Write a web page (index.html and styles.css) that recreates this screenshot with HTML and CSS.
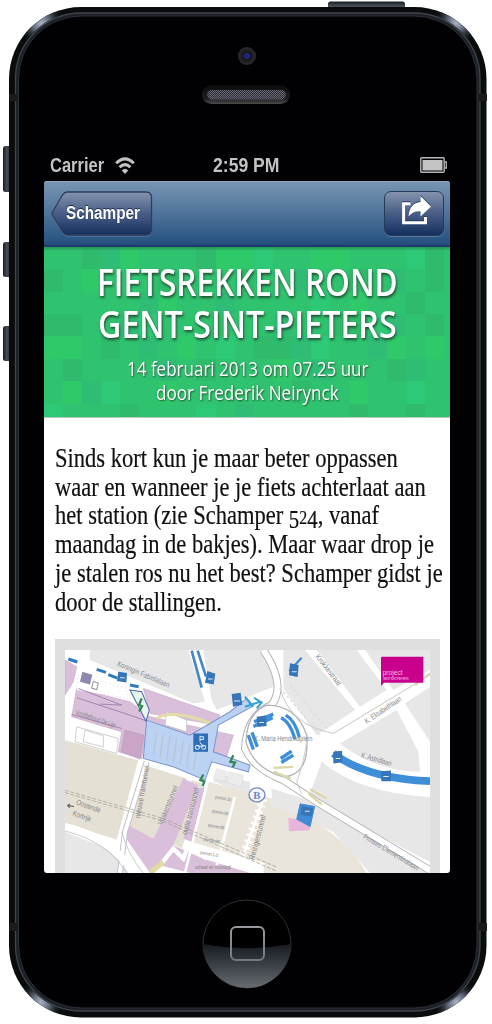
FILE: index.html
```html
<!DOCTYPE html>
<html lang="nl">
<head>
<meta charset="utf-8">
<title>Schamper</title>
<link rel="stylesheet" href="styles.css">
</head>
<body>
<div class="device">
  <svg class="shell" viewBox="0 0 492 1024" aria-hidden="true">
    <defs>
      <linearGradient id="btn" x1="0" x2="1" y1="0" y2="0"><stop offset="0" stop-color="#15191f"/><stop offset=".4" stop-color="#444b57"/><stop offset="1" stop-color="#20252c"/></linearGradient>
      <linearGradient id="top" x1="0" x2="0" y1="0" y2="1"><stop offset="0" stop-color="#15191f"/><stop offset=".5" stop-color="#4a5059"/><stop offset="1" stop-color="#20252c"/></linearGradient>
      <radialGradient id="shine"><stop offset="0" stop-color="#aeb5ca"/><stop offset=".4" stop-color="#5d6474"/><stop offset="1" stop-color="#0a0c0f" stop-opacity="0"/></radialGradient>
      <radialGradient id="lens"><stop offset="0" stop-color="#000"/><stop offset=".15" stop-color="#2531a0"/><stop offset=".3" stop-color="#1a2270"/><stop offset=".42" stop-color="#161719"/><stop offset="1" stop-color="#2c2c2d"/></radialGradient>
      <linearGradient id="spk" x1="0" x2="0" y1="0" y2="1"><stop offset="0" stop-color="#0b0b0c"/><stop offset=".7" stop-color="#1d1d1e"/><stop offset="1" stop-color="#4b4b4b"/></linearGradient>
      <pattern id="mesh" width="2" height="2" patternUnits="userSpaceOnUse"><rect width="2" height="2" fill="#2c2c34"/><path d="M0 0h1v1H0zM1 1h1v1H1z" fill="#686875"/></pattern>
      <linearGradient id="gloss" x1="0" x2="0" y1="0" y2="1"><stop offset="0" stop-color="#171b20"/><stop offset=".5" stop-color="#3c4248"/><stop offset="1" stop-color="#686d72"/></linearGradient>
      <linearGradient id="sq" x1="0" x2="0" y1="0" y2="1"><stop offset="0" stop-color="#9898a0"/><stop offset="1" stop-color="#74787f"/></linearGradient>
      <clipPath id="ring"><path clip-rule="evenodd" d="M81 7H414.500A72 72 0 0 1 486.500 79V945.500A72 72 0 0 1 414.500 1017.500H81A72 72 0 0 1 9 945.500V79A72 72 0 0 1 81 7ZM80 13A65 65 0 0 0 15 78V946A65 65 0 0 0 80 1011H415.500A65 65 0 0 0 480.500 946V78A65 65 0 0 0 415.500 13Z"/></clipPath>
    </defs>
    <rect x="328" y="1.500" width="77" height="9" rx="2.500" fill="url(#top)"/>
    <rect x="3" y="146" width="9" height="46" rx="2.500" fill="url(#btn)"/>
    <rect x="3" y="242" width="9" height="35" rx="2.500" fill="url(#btn)"/>
    <rect x="3" y="326" width="9" height="35" rx="2.500" fill="url(#btn)"/>
    <rect x="9" y="7" width="477.500" height="1010.500" rx="72" fill="#0a0c0c"/>
    <g clip-path="url(#ring)">
      <ellipse cx="41" cy="23" rx="24" ry="16" transform="rotate(-38 41 23)" fill="url(#shine)"/>
      <ellipse cx="456" cy="23" rx="24" ry="16" transform="rotate(38 456 23)" fill="url(#shine)"/>
      <ellipse cx="41" cy="1002" rx="24" ry="16" transform="rotate(38 41 1002)" fill="url(#shine)"/>
      <ellipse cx="456" cy="1002" rx="24" ry="16" transform="rotate(-38 456 1002)" fill="url(#shine)"/>
    </g>
    <rect x="15.500" y="13" width="464.500" height="998" rx="66" fill="#1c2025" stroke="#3e434e" stroke-width="1.300"/>
    <rect x="18.500" y="16" width="458.500" height="992" rx="63" fill="#010104" stroke="#2c3039" stroke-width="1"/>
    <path d="M9 94h8v7H9zM479 94h8v7h-8zM9 923h8v8H9zM479 923h8v8h-8z" fill="#181a1c"/>
    <circle cx="247" cy="56" r="9" fill="url(#lens)"/>
    <rect x="202" y="85" width="88" height="19" rx="9.500" fill="url(#spk)"/>
    <rect x="207" y="90" width="79" height="9.500" rx="4.700" fill="url(#mesh)"/>
    <circle cx="247" cy="944" r="44" fill="#000" stroke="#303033"/>
    <path d="M203 944Q247 952 291 944A44 44 0 0 1 203 944Z" fill="url(#gloss)"/>
    <rect x="231" y="927" width="33" height="33" rx="5" fill="none" stroke="url(#sq)" stroke-width="2"/>
  </svg>
  <main class="screen">
    <header class="status">
      <span class="carrier">Carrier</span>
      <svg class="wifi" viewBox="0 0 20 17"><g fill="none" stroke="#c3c3c3" stroke-width="3"><path d="M1.200 6.200Q10-2.500 18.800 6.200"/><path d="M4.600 10.300Q10 5 15.400 10.300"/></g><path d="M6.700 13.500Q10 10 13.300 13.500L10 17Z" fill="#c3c3c3"/></svg>
      <span class="clock">2:59 PM</span>
      <svg class="battery" viewBox="0 0 27 16"><rect x=".8" y=".8" width="23.400" height="14.400" rx="1" fill="none" stroke="#b8b8b8" stroke-width="1.400"/><rect x="2.500" y="3" width="20" height="10.500" fill="#c3c3c3"/><path d="M24.500 5h1.800v6h-1.800" fill="none" stroke="#b8b8b8" stroke-width="1.300"/></svg>
    </header>
    <nav class="bar">
      <a class="back">
        <svg class="face" viewBox="0 0 102 46"><defs><linearGradient id="face" x1="0" x2="0" y1="0" y2="1"><stop offset="0" stop-color="#8493ad"/><stop offset=".48" stop-color="#4b6088"/><stop offset="1" stop-color="#14305e"/></linearGradient></defs><path d="M16 2H95Q100.500 2 100.500 8V39Q100.500 45 95 45H16Q13.500 45 11.500 42L1.500 26Q.5 24 1.500 22L11.500 5Q13.500 2 16 2Z" fill="none" stroke="#7893b3" stroke-opacity=".7"/><path d="M16 1H95Q100.500 1 100.500 7V38Q100.500 44 95 44H16Q13.500 44 11.500 41L1.500 24.500Q.5 23 1.500 21L11.500 4Q13.500 1 16 1Z" fill="url(#face)" stroke="#2d3e5a" stroke-width="1.300"/></svg>
        <span class="back-label">Schamper</span>
      </a>
      <a class="share"><svg viewBox="0 0 30 29"><path d="M9.500 7.800H2.600V26.800H24.500V21" fill="none" stroke="#fff" stroke-width="3"/><path d="M19.500 0L30 10.500L19.500 20.500V15.200Q12 14.500 7.500 20.500Q8.500 7 19.500 6Z" fill="#fff"/></svg></a>
    </nav>
    <section class="hero">
      <svg class="mosaic" viewBox="0 0 21.300 7.600" preserveAspectRatio="none" shape-rendering="crispEdges">
        <rect width="22" height="8" fill="#30c36f"/>
        <path fill="#2fbb6b" d="M0 1h1v1H0zM2 0h1v1H2zM8 0h1v1H8zM1 3h1v1H1zM0 3h1v1H0zM6 1h1v1H6zM3 4h1v1H3zM10 1h1v1h-1zM11 4h2v1h-2zM16 1h1v1h-1zM20 0h1v2h-1zM19 2h1v1h-1zM20 3h1v1h-1zM15 3h2v1h-2zM18 5h1v1h-1zM8 5h1v1H8zM4 7h1v1H4zM13 6h1v1h-1zM16 7h1v1h-1zM19 7h1v1h-1zM6 6h1v1H6zM1 5h1v1H1z"/>
        <path fill="#2fbd76" d="M3 0h1v1H3zM9 2h1v1H9zM4 3h1v1H4zM12 3h1v1h-1zM13 4h1v1h-1zM5 4h1v1H5zM18 1h1v1h-1zM2 6h1v1H2zM6 5h1v1H6zM14 5h1v1h-1zM17 4h1v1h-1zM18 3h1v1h-1zM10 7h1v1h-1zM19 5h1v1h-1zM13 1h1v1h-1zM5 2h1v1H5z"/>
        <path fill="#2fc969" d="M4 0h1v1H4zM10 0h1v1h-1zM14 0h2v1h-2zM16 2h1v1h-1zM6 2h1v1H6zM0 4h2v1H0zM7 4h1v1H7zM12 5h1v1h-1zM6 6h1v1H6zM16 6h1v1h-1zM20 4h1v1h-1zM2 1h1v1H2zM18 4h1v1h-1zM9 0h1v1H9zM1 6h1v1H1z"/>
        <path fill="#2ec977" d="M5 3h1v1H5zM11 0h1v1h-1zM9 4h1v1H9zM14 4h1v1h-1zM3 6h1v1H3zM19 6h1v1h-1zM17 3h1v1h-1zM4 1h1v1H4zM14 2h1v1h-1zM0 7h1v1H0zM8 7h1v1H8zM19 0h1v1h-1z"/>
      </svg>
      <h1 class="title"><span class="t1">FIETSREKKEN ROND</span><span class="t2">GENT-SINT-PIETERS</span></h1>
      <p class="meta"><span class="m1">14 februari 2013 om 07.25 uur</span><span class="m2">door Frederik Neirynck</span></p>
    </section>
    <article class="story">
      <p class="lead"><span class="l1">Sinds kort kun je maar beter oppassen</span><span class="l2">waar en wanneer je je fiets achterlaat aan</span><span class="l3">het station (zie Schamper <span class="num">5</span><span class="two">2</span><span class="num">4</span>, vanaf</span><span class="l4">maandag in de bakjes). Maar waar drop je</span><span class="l5">je stalen ros nu het best? Schamper gidst je</span><span class="l6">door de stallingen.</span></p>
      <figure class="photo">
        <svg class="map" viewBox="45 45 1095 668" preserveAspectRatio="none">
          <rect x="45" y="45" width="1095" height="668" fill="#fff"/>
          <g fill="#e7e7e8">
            <path d="M120 45H415L465 200L430 205L120 75Z"/><path d="M460 45H635L670 130V155L620 175L500 225L485 195Z"/>
            <path d="M700 45H765L915 225L800 300L700 160ZM800 45H920L1010 165L930 215Z"/><path d="M945 45H1140V105L1030 165Z"/>
            <path d="M870 325L1040 225L1105 350L1110 410Q980 410 870 325ZM1065 205L1140 155V320Z"/><path d="M780 475L815 380Q930 475 1140 485V680L890 550Z"/>
            <path d="M45 590L200 650L245 713H45ZM665 460L760 490L1140 713H960L850 590L665 510Z"/>
            <path d="M500 415L600 440V480L490 440Z"/>
          </g>
          <g fill="#e5e0d4"><path d="M45 315L265 375L200 613L45 565ZM285 390L410 430L310 610L225 570ZM425 435L460 445L395 640L340 610Z"/><path d="M475 440L665 490L665 690L425 620ZM665 510L790 560Q890 610 950 713H640Z" fill="#eae5da"/></g>
          <g fill="#d9bfda" stroke="#bd9bbd" stroke-width="1.500"><path d="M80 160L240 200L300 245L550 300L530 365L490 350L290 300L275 370L205 350L215 290L65 245ZM280 160L510 240L500 270L300 235ZM45 75L80 95L70 140L45 180Z"/><path d="M400 430L445 450L370 630L460 670L600 713H420L330 690L300 713L215 590L235 570L310 610ZM445 460L465 455L425 620L400 610Z" stroke="none"/></g>
          <path d="M225 285L282 300L270 372L213 350Z" fill="#caa5c8" stroke="#a78bb2"/>
          <g fill="#fff" stroke="#b8b8ba" stroke-width="2"><path d="M80 275L205 310L200 355L75 320ZM105 285L160 302V335L100 320ZM350 230L410 255V290L345 270Z"/></g>
          <path d="M85 120L230 160L235 190L80 165Z" fill="#fff" stroke="#d9bfda" stroke-width="2" stroke-dasharray="3 9"/>
          <path d="M80 188L240 240L290 258M65 238L215 280M85 160L215 210L150 207" fill="none" stroke="#967ba8" stroke-width="2.500"/>
          <path d="M320 250Q370 220 490 268" fill="none" stroke="#e2dca6" stroke-width="9"/>
          <path d="M290 255L420 300L540 230L590 190L605 215L505 270L490 350L600 390L595 410L485 380L465 435L370 395L280 370Z" fill="#bcd2f2" stroke="#7b95cf" stroke-width="3"/>
          <path d="M320 290L310 360M340 297L330 368M360 303L350 375M380 310L370 382M400 317L390 390M420 323L410 397M440 345L430 405" stroke="#b8c5d4" stroke-width="4"/>
          <path d="M240 165L275 170L298 225L288 258Z" fill="#e7f5ee" stroke="#4869a9" stroke-width="3"/>
          <path d="M210 713L225 590L290 380" stroke="#c0c0cc" stroke-width="18" fill="none"/><path d="M210 713L225 590L290 380" stroke="#fff" stroke-width="12" fill="none"/>
          <path d="M45 575Q190 610 250 713" fill="none" stroke="#fff" stroke-width="24"/><path d="M45 587Q175 620 230 713M215 590Q235 660 280 713" fill="none" stroke="#aeb0bb" stroke-width="2"/>
          <path d="M475 430L405 713M555 485L500 690M640 490L570 690" stroke="#fff" stroke-width="8"/><path d="M640 490L570 690" stroke="#fff" stroke-width="24" stroke-dasharray="7 12"/>
          <path d="M45 465L340 550L680 695M45 472L340 558L680 708" fill="none" stroke="#9b9b8c" stroke-width="3" stroke-dasharray="12 5" opacity=".65"/>
          <path d="M330 690L370 640L400 670L415 630L470 670" stroke="#fff" stroke-width="13" fill="none"/>
          <path d="M300 713L340 680" stroke="#dfdba2" stroke-width="15"/>
          <path d="M500 400L530 410L525 440L490 430ZM535 410L580 420L575 455L530 442Z" fill="#ececec" stroke="#ccc"/>
          <g fill="none"><path d="M640 45Q710 150 665 210Q590 240 585 340Q610 400 700 435L800 500L1140 705" stroke="#b4b4b6" stroke-width="24"/><path d="M640 45Q710 150 665 210Q590 240 585 340Q610 400 700 435L800 500L1140 705" stroke="#fff" stroke-width="18"/><path d="M650 210Q740 210 770 300Q780 420 700 425Q610 400 588 320Q590 235 650 210Z" fill="#fff" stroke="#b4b4b6" stroke-width="4"/><path d="M690 160Q720 270 850 295L1140 120M770 320Q760 390 740 440L755 475" stroke="#ccc" stroke-width="3"/><path d="M700 170L810 300M720 150L830 280" stroke="#ddd" stroke-width="4" stroke-dasharray="9 7"/></g>
          <g fill="none" stroke="#3f8ed8"><path d="M850 355Q950 430 1140 438" stroke-width="23"/><path d="M55 72L82 81M140 103L168 112M175 119L202 129M240 150L266 155" stroke-width="9" stroke="#2f7abd"/><path d="M425 47L455 158M443 47L468 125" stroke-width="8" stroke="#4388c5"/><path d="M693 248Q720 260 735 312M707 240Q735 255 748 306M612 260L670 237M610 274L668 248M595 300L610 343M606 292L622 335M692 370L725 348M694 382L730 360" stroke-width="10"/><path d="M718 108L755 68" stroke-width="7"/><path d="M585 215L630 200M612 188L635 202L620 220M585 185L610 215" stroke-width="6" stroke="#36a0d8"/></g>
          <g fill="#3775b9"><path d="M205 110l26 4-2 28-28-4zM472 108l24 8-5 32-26-5zM545 177l27-4 5 36-28 6zM720 85l26 5-3 36-26-5zM620 245l28-4 2 32-28 3zM850 350l26-3 2 34-28 4zM993 408l30-2v32h-29z"/><path d="M750 505l45 8-14 62-42-22z" fill="#408bd4"/><path d="M430 295h44v55h-44z" fill="#2e6db7"/></g>
          <g fill="none" stroke="#dce9f8" stroke-width="3"><path d="M450 302v17M450 305h10v8h-10M443 333h16l-9-11M210 128h14M474 132h14M552 198h18M726 110h14M628 262h14M857 370h14M1000 424h16M765 530h18"/><circle cx="442" cy="336" r="6"/><circle cx="461" cy="336" r="6"/></g>
          <path d="M97 110l30 9-7 29-30-8z" fill="#8e88b4"/><path d="M103 120l18 5-4 15-17-4zM130 139l15 5-5 20-15-5z" fill="none" stroke="#8f8e9e" stroke-width="3"/>
          <path d="M275 190l-8 20 9 3-8 16M550 360l-9 20 14 2-7 14M460 418l-9 17 12 4-5 14" stroke="#348b57" stroke-width="7" fill="none"/>
          <path d="M670 398L730 395M672 410L722 430M780 462L830 490M775 475L815 507M1095 150L1140 115" stroke="#ddd6a8" stroke-width="7"/>
          <path d="M715 548L780 555V585L717 588Z" fill="#e8b4d9"/>
          <path d="M750 505l45 8-14 62-42-22z" fill="#408bd4"/><path d="M755 512l34 6-3 26-34-5z" fill="#3775b9"/><path d="M765 528h14" stroke="#dce9f8" stroke-width="3"/>
          <path d="M995 65H1120V143H1002L993 153V68Z" fill="#c8008c"/>
          <ellipse cx="621" cy="479" rx="24" ry="21" fill="#f5f6ff" stroke="#7086c0" stroke-width="4"/>
          <g class="labels">
            <text transform="translate(200 92) rotate(23)" textLength="168" lengthAdjust="spacingAndGlyphs">Koningin Fabiolalaan</text><text transform="translate(75 238) rotate(19)" textLength="125" lengthAdjust="spacingAndGlyphs">Voorbehoud De Lijn</text>
            <text transform="translate(270 550) rotate(-80)" textLength="160" lengthAdjust="spacingAndGlyphs">nieuwe tramtunnel</text><text transform="translate(336 570) rotate(-67)" textLength="125" lengthAdjust="spacingAndGlyphs">Voskenstunnel</text><text transform="translate(410 600) rotate(-75)" textLength="145" lengthAdjust="spacingAndGlyphs">oude tramtunnel</text>
            <text transform="translate(77 507) rotate(20)" textLength="76" lengthAdjust="spacingAndGlyphs">Oostende</text><text transform="translate(66 540) rotate(20)" textLength="58" lengthAdjust="spacingAndGlyphs">Kortrijk</text>
            <text class="tiny" transform="translate(495 490) rotate(10)" textLength="50">perron 10</text><text class="tiny" transform="translate(485 532) rotate(10)" textLength="50">perron 09</text><text class="tiny" transform="translate(473 574) rotate(10)" textLength="50">perron 08</text><text class="tiny" transform="translate(460 616) rotate(10)" textLength="50">perron 06</text><text class="tiny" transform="translate(450 656) rotate(10)" textLength="54">perron 1-3</text><text class="tiny" x="435" y="702" textLength="108">schaal en noordpijl</text>
            <text x="613" y="319" textLength="174" lengthAdjust="spacingAndGlyphs">K. Maria Hendrikaplein</text><text transform="translate(795 65) rotate(52)" textLength="112" lengthAdjust="spacingAndGlyphs">Krokkestraat</text><text transform="translate(950 267) rotate(-34)" textLength="128" lengthAdjust="spacingAndGlyphs">K. Elisabethlaan</text><text transform="translate(932 367) rotate(16)" textLength="94" lengthAdjust="spacingAndGlyphs">K. Astridlaan</text><text transform="translate(938 608) rotate(31)" textLength="190" lengthAdjust="spacingAndGlyphs">Prinses Clementinalaan</text><text transform="translate(612 675) rotate(-75)" textLength="138" lengthAdjust="spacingAndGlyphs">Reizigerstunnel</text>
            <text class="stop" x="610" y="490">B</text><text class="project" x="998" y="120">project</text><text class="project small" x="998" y="136" textLength="78">GENT SINT-PIETERS</text>
          </g>
          <path d="M72 514L53 511M60 506L53 511L59 517" fill="none" stroke="#555" stroke-width="3"/>
        </svg>
      </figure>
    </article>
  </main>
</div>
</body>
</html>
```
FILE: styles.css
```css
body { margin: 0; background: #fff; }
.device { position: relative; width: 492px; height: 1024px; overflow: hidden; }
.shell { position: absolute; inset: 0; width: 492px; height: 1024px; }
.screen { position: relative; box-sizing: border-box; width: 406px; height: 873px; margin-left: 44px; padding-top: 149px; display: flex; flex-direction: column; overflow: hidden; border-radius: 0 0 3px 3px; }

.status { flex: none; height: 32px; padding: 0 3px 0 6px; display: grid; grid-template-columns: 64px 99px 1fr 27px; align-items: center; color: #c3c3c3; font: bold 20px/32px "Liberation Sans", Arial, sans-serif; white-space: nowrap; }
.carrier, .clock, .back-label, .title span, .meta span, .lead > span { display: block; width: max-content; transform-origin: 0 50%; }
.carrier { transform: scaleX(.825); }
.clock { transform: scaleX(.88); }
.wifi { width: 20px; height: 17px; overflow: visible; padding-left: 1px; }
.battery { width: 27px; height: 16px; }

.bar { flex: none; height: 66px; box-sizing: border-box; padding: 10px 6px 0 7px; display: flex; justify-content: space-between; background: linear-gradient(#7896b3, #50749b 48%, #24507f 96%, #213c6c 97%); border-radius: 3px 3px 0 0; box-shadow: inset 0 1px #91a8be; }
.back { position: relative; width: 102px; height: 46px; box-sizing: border-box; padding-left: 15px; color: #fff; font: bold 18px/45px "Liberation Sans", Arial, sans-serif; text-shadow: 0 -1px 1px #17294a; }
.face { position: absolute; inset: 0; width: 102px; height: 46px; }
.back-label { position: relative; transform: scaleX(.85); }
.share { width: 60px; height: 45px; box-sizing: border-box; border: 1.5px solid #293b59; border-radius: 7px; background: linear-gradient(#8493ad, #4b6088 48%, #14305e); box-shadow: 0 1px #58789e; display: flex; justify-content: center; padding: 4px 0 0 3px; }
.share svg { width: 30px; height: 29px; filter: drop-shadow(0 -1px 0 #2a3d61); }

.hero { position: relative; flex: none; height: 171px; box-sizing: border-box; padding: 13px 0 0; overflow: hidden; border-bottom: 1px solid #b9c9be; color: #fff; font-family: "Open Sans", sans-serif; }
.hero::before { content: ""; position: absolute; z-index: 1; inset: 0 0 auto; height: 4px; background: linear-gradient(#1d774799, #1d774700); }
.mosaic { position: absolute; inset: 0; width: 406px; height: 170px; }
.title { position: relative; margin: 0; font-size: 38.5px; font-weight: 600; line-height: 42px; text-shadow: 1px 2px 3px #214d32; }
.meta { position: relative; margin: 12px 0 0; font-size: 20.5px; line-height: 24px; text-shadow: 1px 1px 2px #214d32; }
.title span, .meta span { white-space: nowrap; }
.t1 { margin-left: 53px; transform: scaleX(.82); }
.t2 { margin-left: 54px; transform: scaleX(.837); }
.m1 { margin-left: 83px; transform: scaleX(.83); }
.m2 { margin-left: 112px; transform: scaleX(.834); }

.story { flex: 1; padding: 26px 10px 0 11px; background: #fff; }
.lead { margin: 0; height: 173px; color: #111; font: 27px/28.700px "Liberation Serif", "Times New Roman", serif; white-space: nowrap; -webkit-text-stroke: .2px #111; }
.lead > span { transform: scaleX(.834); }
.num { font-size: 25px; vertical-align: -4px; line-height: 1px; }
.two { font-size: 19px; line-height: 1px; }
.photo { margin: 22px 0 0; width: 385px; height: 240px; box-sizing: border-box; padding: 11px 10px 0; background: #dfdfdf; }
.map { display: block; width: 365px; height: 223px; }
.labels { font: 23px "Liberation Sans", Arial, sans-serif; fill: #858589; }
.tiny { font-size: 14px; }
.stop { font: bold 32px "Liberation Serif", serif; fill: #6d86c4; }
.project { font-size: 20px; fill: #f6bde3; }
.small { font-size: 10px; }
```
